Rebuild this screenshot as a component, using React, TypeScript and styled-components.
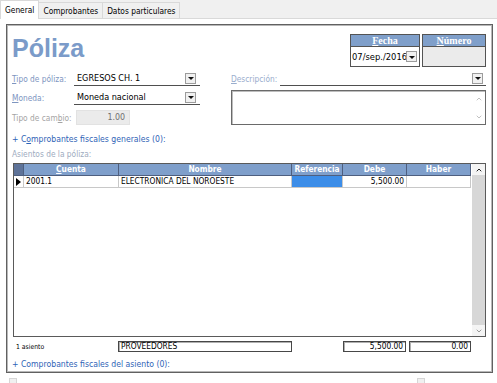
import React from "react";
import styled, { createGlobalStyle } from "styled-components";
import { ChevronUp, ChevronDown } from "lucide-react";

const UI_FONT = `"DejaVu Sans Condensed", "DejaVu Sans", "Liberation Sans", sans-serif`;

const GlobalStyle = createGlobalStyle`
  html, body { margin: 0; padding: 0; background: #fff; }
  body {
    font-family: ${UI_FONT};
    font-stretch: condensed;
    font-size: 8.3px;
    color: #000;
  }
  * { box-sizing: border-box; }
`;

const Window = styled.div`
  width: 497px;
  height: 383px;
  overflow: hidden;
  background: #fff;
  display: flex;
  flex-direction: column;
`;

const TabBar = styled.div`
  height: 19px;
  flex: none;
  display: flex;
  align-items: flex-end;
  background: #f0f0f0;
  border-bottom: 1px solid #d9d9d9;
`;

const Tab = styled.div<{ $active?: boolean }>`
  height: ${({ $active }) => ($active ? 19 : 16)}px;
  margin-bottom: ${({ $active }) => ($active ? -1 : 0)}px;
  margin-left: ${({ $active }) => ($active ? 0 : -1)}px;
  padding: 0 4px;
  display: flex;
  align-items: center;
  background: ${({ $active }) => ($active ? "#fff" : "#f0f0f0")};
  border: 1px solid #d9d9d9;
  border-bottom: none;
  white-space: nowrap;
  position: relative;
  z-index: ${({ $active }) => ($active ? 1 : 0)};
`;

const Page = styled.div`
  flex: 1;
  padding: 5px 4px 0 6px;
  display: flex;
  flex-direction: column;
`;

const Frame = styled.div`
  width: 487px;
  height: 349px;
  border: 1px solid #616161;
  box-shadow: inset 0 0 0 1px #b8b8b8;
  padding: 9px 6px 0 5px;
  display: flex;
  flex-direction: column;
`;

const HeaderRow = styled.div`
  height: 33px;
  display: flex;
  justify-content: space-between;
  align-items: flex-start;
`;

const Title = styled.div`
  margin-top: 2px;
  font-family: "Liberation Sans", Arial, sans-serif;
  font-weight: bold;
  font-size: 25px;
  line-height: 25px;
  color: #7b9bc9;
`;

const StampTable = styled.div`
  display: flex;
  gap: 2px;
`;

const StampCol = styled.div<{ $w: number }>`
  width: ${({ $w }) => $w}px;
  height: 33px;
  border: 1px solid #535353;
  display: flex;
  flex-direction: column;
`;

const StampHead = styled.div`
  height: 12px;
  background: #7f9fca;
  border-bottom: 1px solid #535353;
  color: #fff;
  font-family: "Liberation Serif", "Times New Roman", serif;
  font-weight: bold;
  font-size: 10px;
  line-height: 11px;
  text-align: center;
`;

const StampValue = styled.div<{ $muted?: boolean }>`
  flex: 1;
  background: ${({ $muted }) => ($muted ? "#ebebeb" : "#fff")};
  display: flex;
  align-items: center;
  padding-left: 1px;
  font-size: 9.3px;
  overflow: hidden;
`;

const ClipText = styled.span`
  flex: 1;
  overflow: hidden;
  white-space: nowrap;
`;

const DropButton = styled.div<{ $mr?: number }>`
  width: 11px;
  height: 11px;
  flex: none;
  margin-right: ${({ $mr }) => $mr ?? 2}px;
  background: #f1f1f1;
  border: 1px solid #9c9c9c;
  display: flex;
  align-items: center;
  justify-content: center;
  &::after {
    content: "";
    border-left: 3px solid transparent;
    border-right: 3px solid transparent;
    border-top: 3px solid #111;
    margin-top: 1px;
  }
`;

const FormArea = styled.div`
  margin-top: 4px;
  height: 55px;
  display: flex;
`;

const FieldCol = styled.div<{ $w: number; $ml?: number }>`
  width: ${({ $w }) => $w}px;
  margin-left: ${({ $ml }) => $ml ?? 0}px;
  display: flex;
  flex-direction: column;
  gap: 4px;
`;

const FieldRow = styled.div<{ $h?: number }>`
  height: ${({ $h }) => $h ?? 15}px;
  display: flex;
  align-items: center;
`;

const FieldLabel = styled.span<{ $w: number; $tone?: "accent" | "light" | "disabled" }>`
  width: ${({ $w }) => $w}px;
  flex: none;
  white-space: nowrap;
  color: ${({ $tone }) =>
    $tone === "disabled" ? "#a4a4a4" : $tone === "light" ? "#9aadcd" : "#7e95bf"};
`;

const Combo = styled.div`
  flex: 1;
  height: 15px;
  align-self: flex-start;
  border-bottom: 1px solid #4f4f4f;
  display: flex;
  align-items: center;
  padding-left: 3px;
  font-size: 9px;
`;

const ComboText = styled.span`
  flex: 1;
  white-space: nowrap;
`;

const RateInput = styled.div`
  width: 54px;
  height: 15px;
  margin-left: 2px;
  background: #ebebeb;
  border: 1px solid #e2e2e2;
  color: #6f6f6f;
  font-size: 8.8px;
  line-height: 13px;
  text-align: right;
  padding-right: 4px;
`;

const Memo = styled.div`
  height: 35px;
  border: 1px solid #6a6a6a;
  box-shadow: inset 1px 1px 0 #bdbdbd;
  display: flex;
  justify-content: flex-end;
`;

const MemoScroll = styled.div`
  width: 13px;
  display: flex;
  flex-direction: column;
  justify-content: space-between;
  align-items: center;
  padding: 4px 0 3px;
  color: #b5b5b5;
`;

const LinkText = styled.div<{ $mt: number }>`
  margin-top: ${({ $mt }) => $mt}px;
  line-height: 12px;
  font-size: 8.6px;
  color: #2f63b6;
  white-space: nowrap;
`;

const SectionLabel = styled.div`
  margin-top: 3px;
  line-height: 12px;
  color: #9eabc0;
`;

const COLS = "10px 95px 173px 51px 64px 64px";

const Grid = styled.div`
  margin-top: 3px;
  margin-left: 1px;
  width: 473px;
  height: 174px;
  border: 1px solid #5a5a5a;
  display: flex;
`;

const TableArea = styled.div`
  width: 457px;
  display: flex;
  flex-direction: column;
`;

const GridRow = styled.div<{ $head?: boolean }>`
  display: grid;
  grid-template-columns: ${COLS};
  height: 12px;
`;

const HeadCell = styled.div<{ $dark?: boolean }>`
  background: ${({ $dark }) => ($dark ? "#5e7399" : "#7f9fcb")};
  color: #fff;
  font-weight: bold;
  line-height: 11px;
  text-align: center;
  border-right: 1px solid #4e5f7f;
  border-bottom: 1px solid #4e5f7f;
  white-space: nowrap;
  overflow: hidden;
`;

const BodyCell = styled.div<{ $align?: "left" | "right"; $selected?: boolean }>`
  background: ${({ $selected }) => ($selected ? "#3c8de8" : "#fff")};
  border-right: 1px solid #c8c8c8;
  border-bottom: 1px solid #c8c8c8;
  padding: 0 2px;
  line-height: 11px;
  text-align: ${({ $align }) => $align ?? "left"};
  white-space: nowrap;
  overflow: hidden;
`;

const Pointer = styled.div`
  border-right: 1px solid #c8c8c8;
  border-bottom: 1px solid #c8c8c8;
  display: flex;
  align-items: center;
  padding-left: 2px;
  &::after {
    content: "";
    border-top: 4px solid transparent;
    border-bottom: 4px solid transparent;
    border-left: 5px solid #000;
  }
`;

const ScrollBar = styled.div`
  width: 13px;
  margin-left: 1px;
  display: flex;
  flex-direction: column;
`;

const ScrollArrow = styled.div<{ $dim?: boolean }>`
  height: 11px;
  flex: none;
  display: flex;
  align-items: center;
  justify-content: center;
  background: #f4f4f4;
  color: ${({ $dim }) => ($dim ? "#9a9a9a" : "#222")};
`;

const ScrollTrack = styled.div`
  flex: 1;
  background: #d7d7d7;
`;

const Totals = styled.div`
  margin-top: 3px;
  margin-left: 2px;
  height: 13px;
  display: grid;
  grid-template-columns: 104px 174px 51px 63px 65px;
  align-items: center;
`;

const CountText = styled.span`
  padding-left: 2px;
  font-size: 6.8px;
`;

const TotalBox = styled.div<{ $align?: "left" | "right"; $ml?: number }>`
  height: 11px;
  margin-left: ${({ $ml }) => $ml ?? 0}px;
  border: 1px solid #474747;
  box-shadow: inset 1px 1px 0 #b0b0b0;
  background: #fff;
  padding: 0 2px;
  line-height: 9px;
  text-align: ${({ $align }) => $align ?? "left"};
  white-space: nowrap;
  overflow: hidden;
`;

const StubRow = styled.div`
  margin-top: 5px;
  height: 6px;
  display: flex;
`;

const Stub = styled.div<{ $ml: number }>`
  width: 8px;
  height: 6px;
  margin-left: ${({ $ml }) => $ml}px;
  background: #f0f0f0;
  border: 1px solid #d6d6d6;
  border-bottom: none;
`;

const columns = [
  { key: "cuenta", label: <><u>C</u>uenta</> },
  { key: "nombre", label: "Nombre" },
  { key: "referencia", label: "Referencia" },
  { key: "debe", label: "Debe" },
  { key: "haber", label: "Haber" },
];

const rows = [
  { cuenta: "2001.1", nombre: "ELECTRONICA DEL NOROESTE", referencia: "", debe: "5,500.00", haber: "" },
];

export default function App() {
  return (
    <>
      <GlobalStyle />
      <Window>
        <TabBar>
          <Tab $active>General</Tab>
          <Tab>Comprobantes</Tab>
          <Tab>Datos particulares</Tab>
        </TabBar>

        <Page>
          <Frame>
            <HeaderRow>
              <Title>Póliza</Title>
              <StampTable>
                <StampCol $w={70}>
                  <StampHead><u>F</u>echa</StampHead>
                  <StampValue>
                    <ClipText>07/sep./2016</ClipText>
                    <DropButton />
                  </StampValue>
                </StampCol>
                <StampCol $w={64}>
                  <StampHead><u>N</u>úmero</StampHead>
                  <StampValue $muted />
                </StampCol>
              </StampTable>
            </HeaderRow>

            <FormArea>
              <FieldCol $w={188}>
                <FieldRow>
                  <FieldLabel $w={62}><u>T</u>ipo de póliza:</FieldLabel>
                  <Combo>
                    <ComboText>EGRESOS CH. 1</ComboText>
                    <DropButton $mr={4} />
                  </Combo>
                </FieldRow>
                <FieldRow>
                  <FieldLabel $w={62}><u>M</u>oneda:</FieldLabel>
                  <Combo>
                    <ComboText>Moneda nacional</ComboText>
                    <DropButton $mr={4} />
                  </Combo>
                </FieldRow>
                <FieldRow $h={17}>
                  <FieldLabel $w={62} $tone="disabled">Tipo de cam<u>b</u>io:</FieldLabel>
                  <RateInput>1.00</RateInput>
                </FieldRow>
              </FieldCol>

              <FieldCol $w={255} $ml={31}>
                <FieldRow>
                  <FieldLabel $w={49} $tone="light"><u>D</u>escripción:</FieldLabel>
                  <Combo>
                    <ComboText />
                    <DropButton $mr={3} />
                  </Combo>
                </FieldRow>
                <Memo>
                  <MemoScroll>
                    <ChevronUp size={8} strokeWidth={2.5} />
                    <ChevronDown size={8} strokeWidth={2.5} />
                  </MemoScroll>
                </Memo>
              </FieldCol>
            </FormArea>

            <LinkText $mt={7}>+ C<u>o</u>mprobantes fiscales generales (0):</LinkText>
            <SectionLabel>Asientos de la póliza:</SectionLabel>

            <Grid>
              <TableArea>
                <GridRow $head>
                  <HeadCell $dark />
                  {columns.map((c) => (
                    <HeadCell key={c.key}>{c.label}</HeadCell>
                  ))}
                </GridRow>
                {rows.map((r) => (
                  <GridRow key={r.cuenta}>
                    <Pointer />
                    <BodyCell>{r.cuenta}</BodyCell>
                    <BodyCell>{r.nombre}</BodyCell>
                    <BodyCell $selected>{r.referencia}</BodyCell>
                    <BodyCell $align="right">{r.debe}</BodyCell>
                    <BodyCell $align="right">{r.haber}</BodyCell>
                  </GridRow>
                ))}
              </TableArea>
              <ScrollBar>
                <ScrollArrow>
                  <ChevronUp size={8} strokeWidth={3} />
                </ScrollArrow>
                <ScrollTrack />
                <ScrollArrow $dim>
                  <ChevronDown size={8} strokeWidth={3} />
                </ScrollArrow>
              </ScrollBar>
            </Grid>

            <Totals>
              <CountText>1 asiento</CountText>
              <TotalBox>PROVEEDORES</TotalBox>
              <span />
              <TotalBox $align="right">5,500.00</TotalBox>
              <TotalBox $align="right" $ml={3}>0.00</TotalBox>
            </Totals>

            <LinkText $mt={5}>+ Comprobantes fiscales del asiento (0):</LinkText>
          </Frame>
          <StubRow>
            <Stub $ml={3} />
            <Stub $ml={400} />
          </StubRow>
        </Page>
      </Window>
    </>
  );
}
